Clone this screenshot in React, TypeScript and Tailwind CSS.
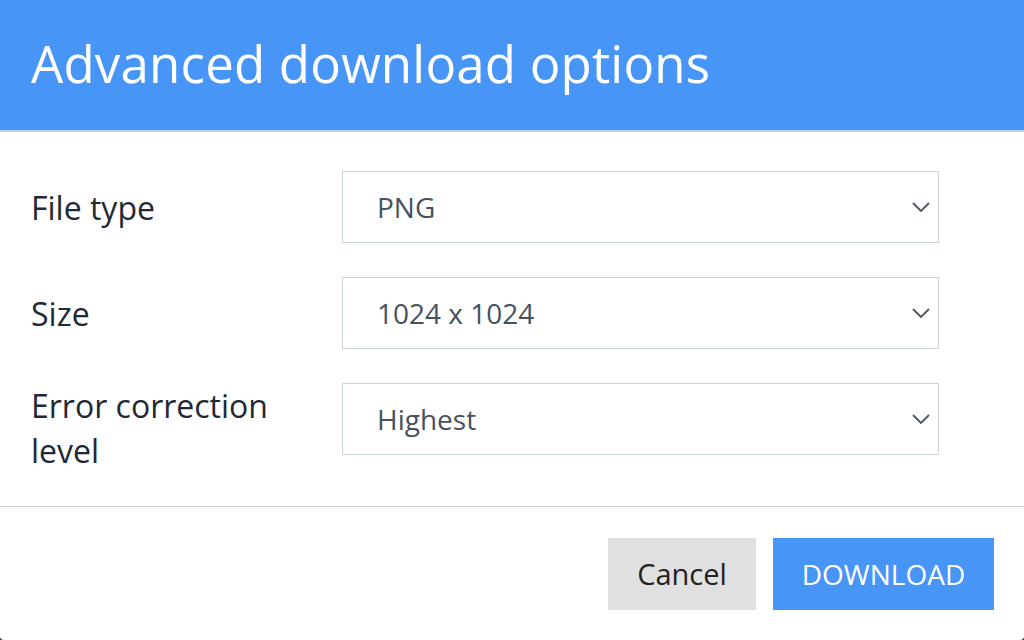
import React from "react";

const Chevron = () => (
  <svg width="18" height="10" viewBox="0 0 18 10" className="absolute right-[8px] top-1/2 -translate-y-1/2">
    <path d="M1 1 L9 9 L17 1" fill="none" stroke="#4a5561" strokeWidth="1.8" />
  </svg>
);

const Select = ({ value }: { value: string }) => (
  <div className="relative w-[597px] h-[72px] border border-[#c9d3d9] bg-white flex items-center pl-[34px] text-[28px] text-[#47525e]">
    {value}
    <Chevron />
  </div>
);

export default function App() {
  return (
    <div
      className="w-[1024px] h-[640px] bg-[#333] overflow-hidden"
      style={{ fontFamily: '"Open Sans", sans-serif' }}
    >
      <div className="w-full h-full bg-white rounded-b-[4px] flex flex-col">
        <div className="h-[132px] shrink-0 bg-[#4795f6] border-b-2 border-[#b9cfe6] flex items-center pl-[31px] pb-[4px]">
          <h1 className="text-[51px] text-white font-normal leading-none tracking-[0.2px]">Advanced download options</h1>
        </div>
        <div className="pt-[39px] flex flex-col gap-[34px]">
          <div className="flex items-center">
            <div className="w-[342px] pl-[31px] text-[32px] leading-[45px] text-[#1f2a36]">File type</div>
            <Select value="PNG" />
          </div>
          <div className="flex items-center">
            <div className="w-[342px] pl-[31px] text-[32px] leading-[45px] text-[#1f2a36]">Size</div>
            <Select value="1024 x 1024" />
          </div>
          <div className="flex items-start h-[90px]">
            <div className="w-[342px] pl-[31px] text-[32px] leading-[45px] text-[#1f2a36]">
              Error correction
              <br />
              level
            </div>
            <Select value="Highest" />
          </div>
        </div>
        <div className="mt-[33px] border-t border-[#c9d3d9]" />
        <div className="flex justify-end gap-[17px] pr-[30px] pt-[31px]">
          <button className="w-[148px] h-[72px] bg-[#e0e0e0] text-[#222] text-[29px]">Cancel</button>
          <button className="w-[221px] h-[72px] bg-[#4795f6] text-white text-[28px]">DOWNLOAD</button>
        </div>
      </div>
    </div>
  );
}
